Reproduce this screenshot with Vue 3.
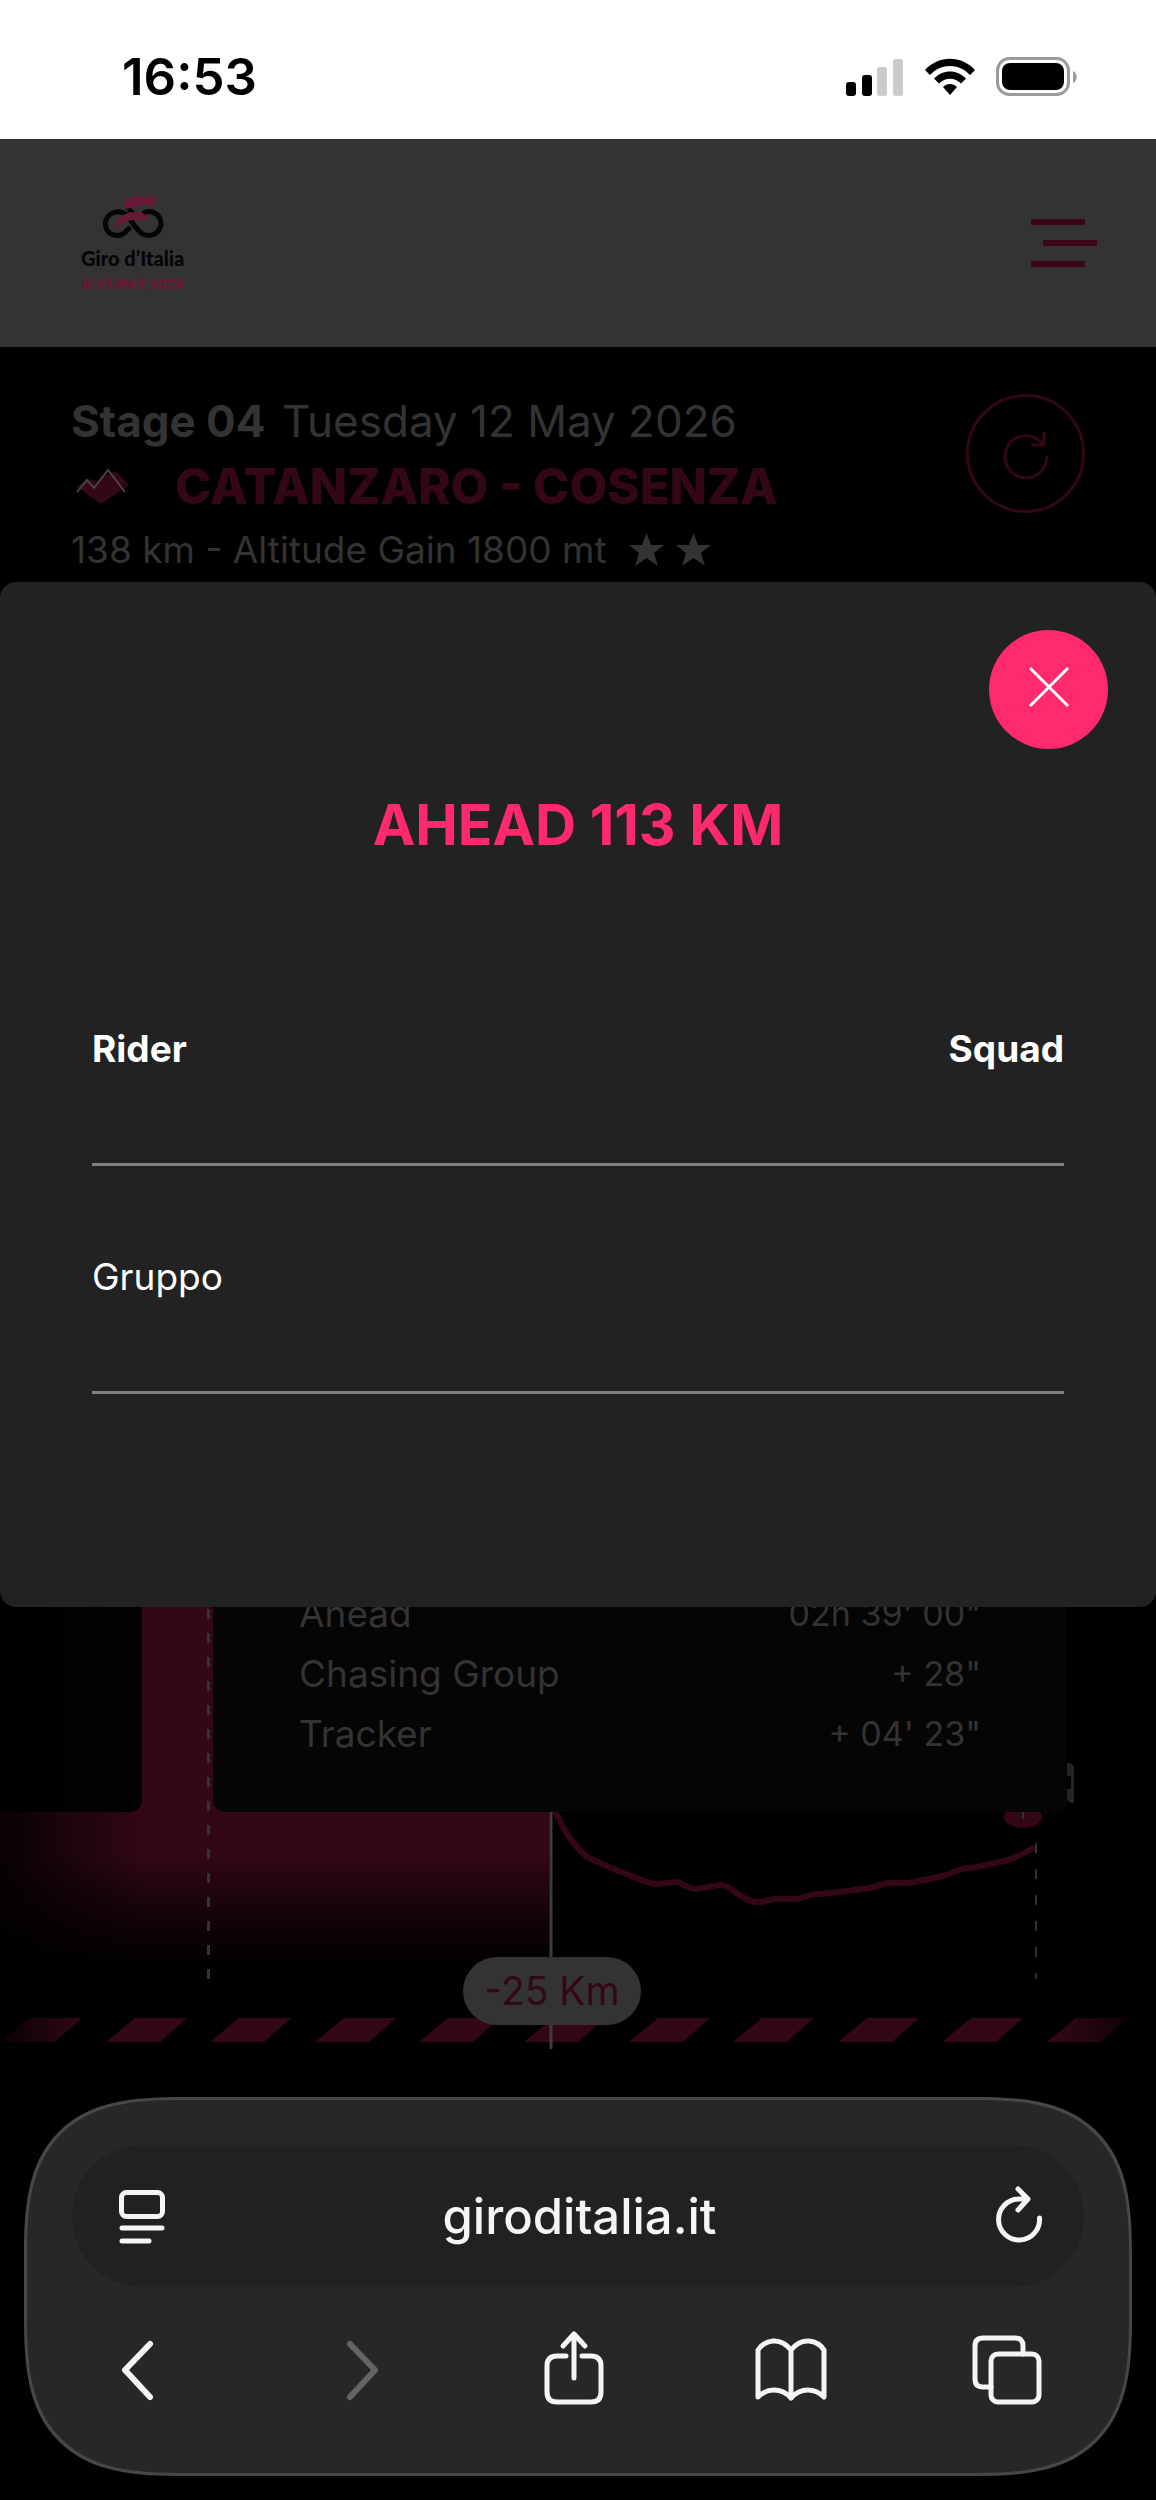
<script setup>
const riders = [{ name: 'Gruppo', squad: '' }]

const gaps = [
  { label: 'Ahead', time: `02h 39' 00"` },
  { label: 'Chasing Group', time: `+ 28"` },
  { label: 'Tracker', time: `+ 04' 23"` },
]

const stripes = Array.from({ length: 12 }, (_, i) => Math.round(1 + i * 104.6))
</script>

<template>
  <div class="screen">
    <div class="status">
      <span class="clock">16:53</span>
      <div class="status-icons">
        <svg width="58" height="38" viewBox="0 0 58 38" aria-hidden="true">
          <rect x="0" y="24" width="10" height="14" rx="3" />
          <rect x="16" y="17" width="10" height="21" rx="3" />
          <rect x="31" y="9" width="10" height="29" rx="3" fill="#cbcbcb" />
          <rect x="47" y="1" width="10" height="37" rx="3" fill="#cbcbcb" />
        </svg>
        <svg width="50" height="38" viewBox="0 0 50 38" aria-hidden="true">
          <path d="M0 12C14 -3 36 -3 50 12L45 17C34 5 16 5 5 17Z" />
          <path d="M9 20.500C18 11 32 11 41 20.500L36 25.500C30 19 20 19 14 25.500Z" />
          <path d="M18 29C22 25 28 25 32 29L25 37Z" />
        </svg>
        <svg width="82" height="40" viewBox="0 0 82 40" aria-hidden="true">
          <rect x="1.500" y="1.500" width="71" height="36" rx="12" fill="none" stroke="#9b9b9b" stroke-width="3" />
          <rect x="6" y="6" width="62" height="27" rx="8" />
          <path d="M77 14C82 16 82 24 77 26Z" fill="#9b9b9b" />
        </svg>
      </div>
    </div>

    <header class="site-header">
      <a class="logo" href="#" aria-label="Giro d'Italia">
        <svg width="62" height="46" viewBox="0 0 62 46" aria-hidden="true">
          <g fill="none" stroke="#050505" stroke-width="5">
            <path d="M25 21C19 16 10 17 5.500 23C1 30 4 39 12 41C20 43 24 38 28 33" />
            <path d="M24 22C29 25 32 32 37 37C42 43 52 43 57 36C62 28 57 20 50 18C46 17 43 18 41 20" />
            <path stroke-width="4" d="M25 13Q28 17 32 19" />
          </g>
          <path fill="#6a1837" d="M22 12C22 3 33 0 43 3C49 4 54 8 54 13C45 9 36 11 25 15Z" />
          <path fill="#6a1837" d="M46 2C50 -2 56 2 55 8C52 5 50 3 46 2Z" />
          <path fill="#6a1837" d="M26 19C33 17 41 18 45 22L44 27C35 25 25 24 12 35C14 26 19 21 26 19Z" />
        </svg>
        <span class="logo-name">Giro d’Italia</span>
        <span class="logo-date">8–31 MAY 2026</span>
      </a>
      <button class="menu" type="button" aria-label="Menu">
        <span></span><span></span><span></span>
      </button>
    </header>

    <section class="stage">
      <div class="stage-info">
        <p class="stage-day"><strong>Stage 04</strong> Tuesday 12 May 2026</p>
        <h1 class="stage-route">
          <svg width="56" height="36" viewBox="0 0 56 36" aria-hidden="true">
            <path fill="#330718" d="M1 17L6 15L13 10L22 12L33 5L40 2L54 16L26 35Z" />
            <path fill="none" stroke="#444" stroke-width="2" d="M2 23L12 11L19 19L33 1L50 23" />
          </svg>
          <span>CATANZARO - COSENZA</span>
        </h1>
        <p class="stage-facts">
          <span>138 km - Altitude Gain 1800 mt</span>
          <svg v-for="n in 2" :key="n" width="35" height="34" viewBox="0 0 35 34" aria-hidden="true">
            <path fill="#333" d="M17.500 0L22 12L35 12L25 20L29 33L17.500 25L6 33L10 20L0 12L13 12Z" />
          </svg>
        </p>
      </div>
      <button class="refresh" type="button" aria-label="Refresh">
        <svg width="48" height="48" viewBox="0 0 48 48" aria-hidden="true">
          <path fill="none" stroke="#330718" stroke-width="3" d="M45 26A21 21 0 1 1 39 12L42 15M42 2V15H29" />
        </svg>
      </button>
    </section>

    <section class="modal" role="dialog" aria-modal="true" aria-labelledby="modal-title">
      <button class="close" type="button" aria-label="Close">
        <svg width="40" height="40" viewBox="0 0 40 40" aria-hidden="true">
          <path fill="none" stroke="#fff" stroke-width="3" d="M1 1L39 39M39 1L1 39" />
        </svg>
      </button>
      <h2 id="modal-title">AHEAD 113 KM</h2>
      <table>
        <thead>
          <tr><th>Rider</th><th>Squad</th></tr>
        </thead>
        <tbody>
          <tr v-for="r in riders" :key="r.name"><td>{{ r.name }}</td><td>{{ r.squad }}</td></tr>
        </tbody>
      </table>
    </section>

    <section class="live">
      <svg class="profile" viewBox="0 0 1156 482" preserveAspectRatio="none" aria-hidden="true">
        <defs>
          <linearGradient id="fadeDown" x1="0" y1="0" x2="0" y2="1">
            <stop offset="0" stop-color="#fff" />
            <stop offset="0.720" stop-color="#fff" />
            <stop offset="0.850" stop-color="#777" />
            <stop offset="1" stop-color="#000" />
          </linearGradient>
          <linearGradient id="fadeLeft" x1="0" y1="0" x2="1" y2="0">
            <stop offset="0" stop-color="#000" stop-opacity="0.850" />
            <stop offset="0.270" stop-color="#000" stop-opacity="0" />
          </linearGradient>
          <linearGradient id="stripeFade" x1="0" y1="0" x2="1" y2="0">
            <stop offset="0" stop-color="#333" />
            <stop offset="0.080" stop-color="#fff" />
            <stop offset="0.910" stop-color="#fff" />
            <stop offset="0.980" stop-color="#444" />
            <stop offset="1" stop-color="#222" />
          </linearGradient>
          <mask id="areaMask" maskUnits="userSpaceOnUse" x="0" y="0" width="1156" height="482">
            <rect width="549" height="400" fill="url(#fadeDown)" />
          </mask>
          <mask id="stripeMask" maskUnits="userSpaceOnUse" x="0" y="440" width="1156" height="42">
            <rect y="440" width="1156" height="42" fill="url(#stripeFade)" />
          </mask>
        </defs>
        <g mask="url(#areaMask)">
          <rect width="549" height="400" fill="#330718" />
          <rect width="549" height="400" fill="url(#fadeLeft)" />
        </g>
        <path class="dash" stroke-width="3" stroke-dasharray="10 14" d="M208.500 42V412" />
        <g mask="url(#stripeMask)" fill="#330718">
          <path v-for="x in stripes" :key="x" :d="`M${x} 475L${x + 29} 451H${x + 81}L${x + 54} 475Z`" />
        </g>
        <path
          fill="none"
          stroke="#330718"
          stroke-width="6"
          stroke-linejoin="round"
          d="M551 235L556 246Q568 274 587 290L611 301L634 310Q650 317 657 317L678 315Q690 322 698 322L719 318Q726 317 736 326Q752 337 761 335L774 332H797Q812 327 820 327L839 325L870 321L887 316H908Q930 312 943 309L962 302L977 300L1004 294Q1014 292 1035 280"
        />
        <path class="dash" stroke-width="2" stroke-dasharray="10 16" d="M1036 276V412" />
        <ellipse cx="1023" cy="250" rx="19" ry="11" fill="#330718" />
        <path class="dash" stroke-width="2" d="M1023 244V252" />
        <path fill="#242424" d="M1060 196H1070L1074 199V236H1071L1066 232V222H1071V209H1066V200Z" />
        <path stroke="#3c3c3c" stroke-width="3" d="M551 200V482" />
      </svg>
      <div class="cards">
        <div class="card card-prev"></div>
        <dl class="card card-gaps">
          <div v-for="g in gaps" :key="g.label"><dt>{{ g.label }}</dt><dd>{{ g.time }}</dd></div>
        </dl>
      </div>
      <div class="marker">-25 Km</div>
    </section>

    <nav class="browser" aria-label="Browser">
      <div class="address">
        <button type="button" aria-label="Page menu">
          <svg width="46" height="56" viewBox="0 0 46 56" aria-hidden="true">
            <rect x="3.500" y="4.500" width="41" height="24" rx="5" />
            <path d="M4 40H44M4 53H31" />
          </svg>
        </button>
        <span class="url">giroditalia.it</span>
        <button type="button" aria-label="Reload">
          <svg width="46" height="56" viewBox="0 0 46 56" aria-hidden="true">
            <path d="M44.500 30A20.500 20.500 0 1 1 24 11H32M23 1L33 11L23 22" />
          </svg>
        </button>
      </div>
      <div class="tools">
        <button type="button" aria-label="Back">
          <svg width="70" height="74" viewBox="0 0 70 74" aria-hidden="true"><path stroke-width="6" d="M47 11L22 37L47 64" /></svg>
        </button>
        <button type="button" aria-label="Forward" disabled>
          <svg width="70" height="74" viewBox="0 0 70 74" aria-hidden="true"><path stroke-width="6" d="M30 11L55 37L30 64" /></svg>
        </button>
        <button type="button" aria-label="Share">
          <svg width="70" height="74" viewBox="0 0 70 74" aria-hidden="true">
            <path d="M28 23H19Q9 23 9 33V59Q9 69 19 69H53Q63 69 63 59V33Q63 23 53 23H44M36 45V1M25 13L36 1L47 13" />
          </svg>
        </button>
        <button type="button" aria-label="Bookmarks">
          <svg width="70" height="74" viewBox="0 0 70 74" aria-hidden="true">
            <path d="M36 17Q28 7 18 8Q8 9 3 17V64Q10 57 19 57Q29 57 36 65Q43 57 53 57Q62 57 69 64V17Q64 9 54 8Q44 7 36 17V65" />
          </svg>
        </button>
        <button type="button" aria-label="Tabs">
          <svg width="70" height="74" viewBox="0 0 70 74" aria-hidden="true">
            <rect x="19" y="21" width="48" height="48" rx="7" />
            <path d="M19 54H11Q3 54 3 46V13Q3 5 11 5H43Q51 5 51 13V21" />
          </svg>
        </button>
      </div>
    </nav>
  </div>
</template>

<style>
body {
  margin: 0;
  background: #000;
}
</style>

<style scoped>
.screen {
  display: flex;
  flex-direction: column;
  min-height: 100vh;
  background: #000;
  color: #333;
  font-family: Inter, "Liberation Sans", sans-serif;
}

button {
  padding: 0;
  border: 0;
  background: none;
}

svg {
  display: block;
  flex: none;
  overflow: visible;
}

p,
h1,
h2,
dl,
dd {
  margin: 0;
}

.status {
  display: flex;
  align-items: center;
  justify-content: space-between;
  height: 139px;
  padding: 14px 78px 0 122px;
  box-sizing: border-box;
  background: #fff;
  color: #000;
}

.clock {
  font-size: 51px;
  font-weight: 600;
}

.status-icons {
  display: flex;
  align-items: center;
  gap: 21px;
}

.site-header {
  display: flex;
  align-items: center;
  justify-content: space-between;
  height: 208px;
  padding: 0 59px 0 81px;
  box-sizing: border-box;
  background: #333;
}

.logo {
  display: flex;
  flex-direction: column;
  align-items: center;
  color: #050505;
  text-decoration: none;
}

.logo-name {
  font: 900 20px/36px Lato, sans-serif;
}

.logo-date {
  color: #6a1837;
  font-size: 13px;
  font-style: italic;
  font-weight: 900;
  line-height: 16px;
}

.menu {
  display: flex;
  flex-direction: column;
  gap: 15px;
  width: 66px;
}

.menu span {
  width: 54px;
  height: 6px;
  background: #3a0519;
}

.menu span:nth-child(2) {
  align-self: flex-end;
}

.stage {
  display: flex;
  justify-content: space-between;
  height: 235px;
  padding: 39px 71px 0 71px;
  box-sizing: border-box;
}

.stage-day {
  font-size: 44px;
  line-height: 70px;
}

.stage-day strong {
  margin-right: 4px;
}

.stage-route {
  display: flex;
  align-items: center;
  gap: 44px;
  padding-left: 4px;
  color: #330718;
  font-size: 49px;
  font-weight: 800;
  line-height: 62px;
}

.stage-facts {
  display: flex;
  align-items: center;
  gap: 12px;
  font-size: 37px;
  line-height: 64px;
}

.stage-facts span {
  margin-right: 10px;
}

.refresh {
  display: grid;
  place-items: center;
  width: 119px;
  height: 119px;
  margin-top: 8px;
  border: 3px solid #330718;
  border-radius: 50%;
}

.modal {
  position: relative;
  z-index: 2;
  height: 1025px;
  padding: 48px 48px 0;
  box-sizing: border-box;
  border-radius: 16px;
  background: #222;
  color: #fff;
}

.close {
  display: grid;
  place-items: center;
  width: 119px;
  height: 119px;
  margin-left: auto;
  padding-bottom: 6px;
  border-radius: 50%;
  background: #ff296d;
}

.modal h2 {
  margin-top: 38px;
  color: #ff296d;
  font-size: 57px;
  font-weight: 700;
  line-height: 76px;
  text-align: center;
}

.modal table {
  width: calc(100% - 88px);
  margin: 75px 44px 0;
  border-collapse: collapse;
  font-size: 37px;
}

.modal th,
.modal td {
  height: 221px;
  padding: 0 0 4px;
  border-bottom: 3px solid #808080;
  text-align: left;
}

.modal th:last-child,
.modal td:last-child {
  text-align: right;
}

.live {
  display: grid;
  margin-top: -40px;
}

.live > * {
  grid-area: 1 / 1;
}

.profile {
  width: 100%;
  height: 482px;
}

.cards {
  display: flex;
  align-items: flex-start;
  gap: 71px;
  padding-right: 89px;
}

.card {
  height: 245px;
  box-sizing: border-box;
  border-radius: 12px;
  background: #050505;
}

.card-prev {
  width: 142px;
  border-radius: 0 0 12px 0;
  background: linear-gradient(90deg, #000 0 30%, #020305 65%, #010101);
}

.card-gaps {
  flex: 1;
  padding: 17px 86px 0;
  font-size: 34px;
  line-height: 60px;
}

.card-gaps div {
  display: flex;
  justify-content: space-between;
}

.card-gaps dt {
  font-size: 37px;
}

.marker {
  align-self: end;
  justify-self: center;
  width: 178px;
  margin: 0 52px 24px 0;
  border-radius: 34px;
  background: #333;
  color: #330718;
  font-size: 39px;
  line-height: 68px;
  text-align: center;
}

.dash {
  fill: none;
  stroke: #333;
}

.browser {
  margin: 48px 24px 24px;
  padding: 45px 45px 0;
  height: 379px;
  box-sizing: border-box;
  border: 3px solid #484646;
  border-radius: 116px;
  background: #272727;
}

@supports (corner-shape: squircle) {
  .browser {
    border-radius: 160px;
    corner-shape: superellipse(1.5);
  }
}

.browser svg {
  fill: none;
  stroke: #f5f5f5;
  stroke-width: 5;
  stroke-linecap: round;
  stroke-linejoin: round;
}

.browser button:disabled svg {
  stroke: #646464;
}

.address {
  display: flex;
  align-items: center;
  justify-content: space-between;
  height: 142px;
  padding: 0 43px 0 46px;
  border-radius: 71px;
  background: #212121;
}

.url {
  color: #f5f5f5;
  font-size: 49px;
  font-weight: 500;
}

.tools {
  display: flex;
  justify-content: space-between;
  padding: 46px 42px 0 31px;
}
</style>
